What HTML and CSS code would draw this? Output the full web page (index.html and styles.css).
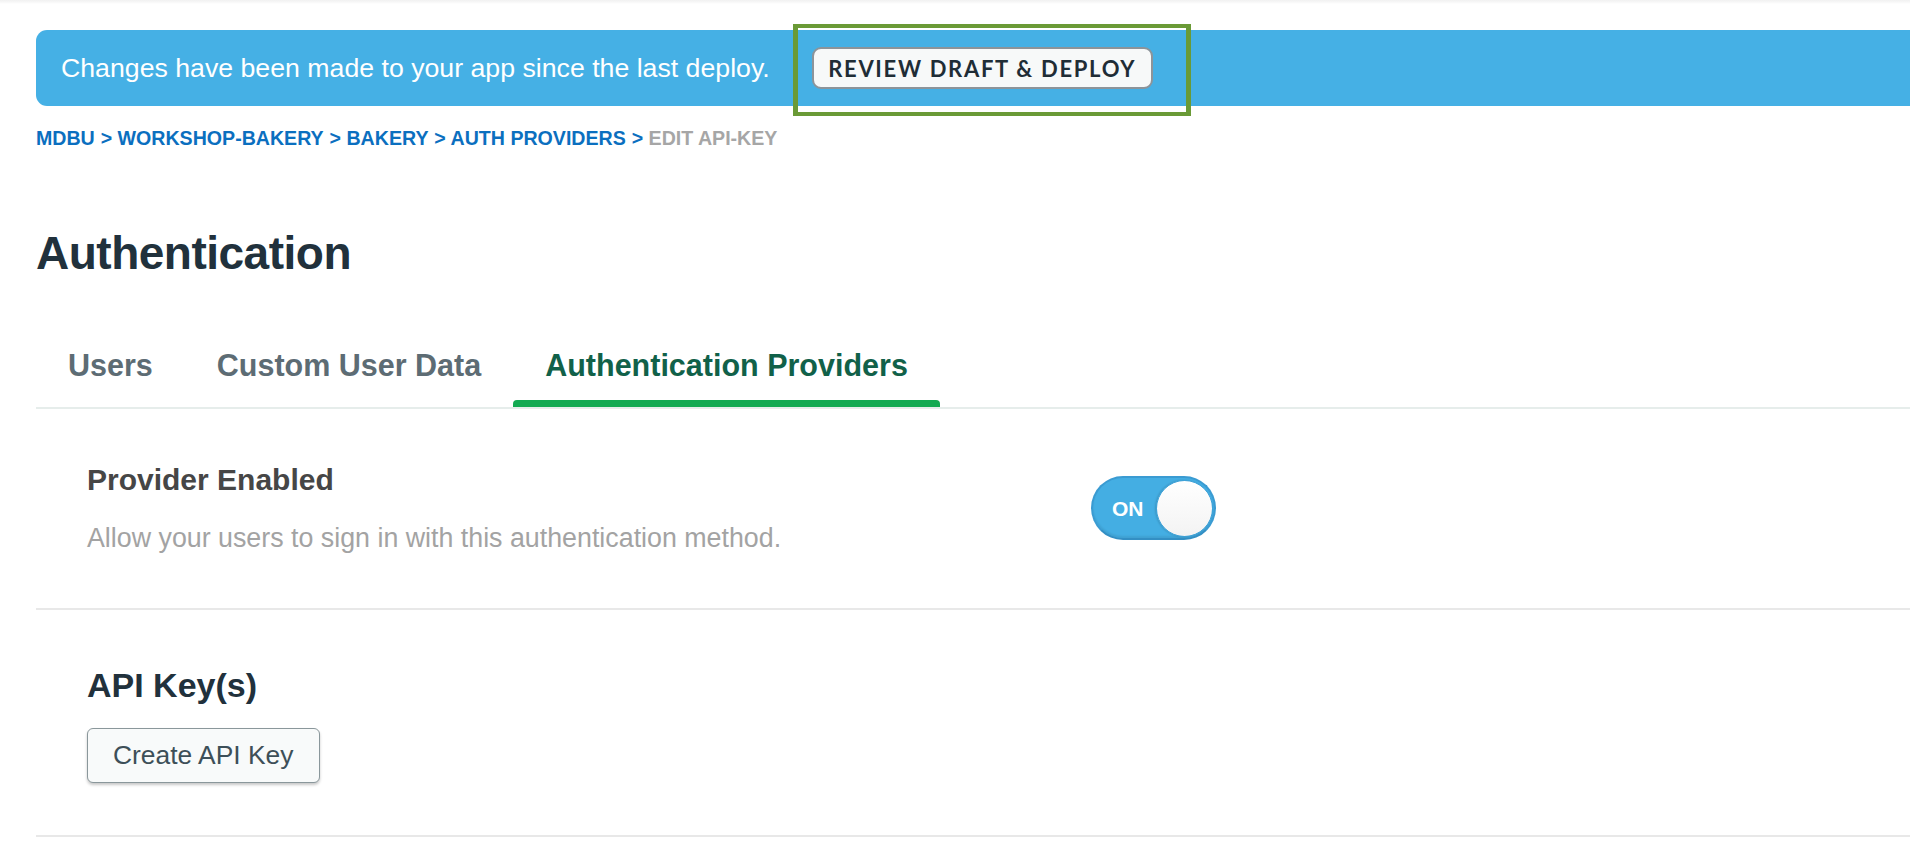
FILE: index.html
```html
<!DOCTYPE html>
<html lang="en">
<head>
<meta charset="utf-8">
<title>Authentication</title>
<link rel="stylesheet" href="styles.css">
</head>
<body>
<main class="page">
  <div class="banner">
    <span class="banner-text">Changes have been made to your app since the last deploy.</span>
    <span class="deploy-wrap">
      <button class="deploy-btn" type="button">Review Draft &amp; Deploy</button>
      <span class="highlight"></span>
    </span>
  </div>

  <nav class="crumbs">
    <a class="crumb" href="#">MDBU</a><span class="sep">&gt;</span>
    <a class="crumb" href="#">WORKSHOP-BAKERY</a><span class="sep">&gt;</span>
    <a class="crumb" href="#">BAKERY</a><span class="sep">&gt;</span>
    <a class="crumb" href="#">AUTH PROVIDERS</a><span class="sep">&gt;</span>
    <span class="crumb-current">EDIT API-KEY</span>
  </nav>

  <h1 class="title">Authentication</h1>

  <div class="tabs">
    <span class="tab">Users</span>
    <span class="tab">Custom User Data</span>
    <span class="tab tab-active">Authentication Providers</span>
  </div>

  <section class="setting-row">
    <div class="setting-text">
      <div class="setting-title">Provider Enabled</div>
      <div class="setting-desc">Allow your users to sign in with this authentication method.</div>
    </div>
    <div class="toggle">
      <span class="toggle-label">ON</span>
      <span class="toggle-knob"></span>
    </div>
  </section>

  <section class="keys">
    <h2 class="keys-title">API Key(s)</h2>
    <button class="create-btn" type="button">Create API Key</button>
  </section>
</main>
</body>
</html>
```

FILE: styles.css
```css
html, body {
  margin: 0;
  padding: 0;
}

body {
  background-color: #ffffff;
  background-image: linear-gradient(to bottom, #f1f1f1 0, #f7f7f7 2px, #ffffff 4px);
  background-repeat: no-repeat;
  background-size: 100% 4px;
  font-family: "Liberation Sans", Arial, Helvetica, sans-serif;
  color: #21313c;
  overflow: hidden;
}

.page {
  padding: 30px 0 0 36px;
}

/* Banner */
.banner {
  display: flex;
  align-items: center;
  height: 76px;
  padding-left: 25px;
  background: #45b0e5;
  border-radius: 11px 0 0 11px;
}

.banner-text {
  font-size: 26.7px;
  color: #ffffff;
  white-space: nowrap;
}

.deploy-wrap {
  position: relative;
  display: inline-flex;
  margin-left: 42px;
}

.deploy-btn {
  box-sizing: border-box;
  width: 341px;
  height: 42px;
  padding: 0;
  border: 2px solid #8c949a;
  border-radius: 9px;
  background: #f7f9f9;
  color: #1f2d36;
  font-family: Lato, "Liberation Sans", sans-serif;
  font-weight: 700;
  font-size: 22px;
  letter-spacing: 1.7px;
  text-transform: uppercase;
}

.highlight {
  position: absolute;
  left: -19px;
  right: -38px;
  top: -23px;
  bottom: -27px;
  border-style: solid;
  border-color: #6a9a36;
  border-width: 4px 5px;
  pointer-events: none;
}

/* Breadcrumbs */
.crumbs {
  margin-top: 20px;
  font-size: 19.6px;
  line-height: 24px;
  font-weight: 700;
  white-space: nowrap;
}

.crumb {
  color: #0b6fbf;
  text-decoration: none;
}

.sep {
  color: #0b6fbf;
  margin-left: 0.3em;
}

.crumb-current {
  color: #a6a6a6;
}

/* Title */
.title {
  margin: 75px 0 66px;
  font-size: 46px;
  line-height: 56px;
  font-weight: 700;
  letter-spacing: -0.5px;
  color: #21313c;
}

/* Tabs */
.tabs {
  display: flex;
  border-bottom: 2px solid #e6edeb;
}

.tab {
  position: relative;
  padding: 0 32px 24px;
  font-size: 30.5px;
  line-height: 36px;
  font-weight: 700;
  color: #5d6c74;
  white-space: nowrap;
}

.tab-active {
  color: #116149;
}

.tab-active::after {
  content: "";
  position: absolute;
  left: 0;
  right: 0;
  bottom: 0;
  height: 7px;
  border-radius: 4px 4px 0 0;
  background: #13aa52;
}

/* Setting row */
.setting-row {
  display: grid;
  grid-template-columns: 1004px auto;
  align-items: center;
  padding: 53px 0 54px 51px;
  border-bottom: 2px solid #e8e8e8;
}

.setting-title {
  font-size: 30px;
  line-height: 36px;
  font-weight: 700;
  color: #464646;
}

.setting-desc {
  margin-top: 24px;
  font-size: 26.8px;
  line-height: 32px;
  color: #a3a3a3;
  white-space: nowrap;
}

.toggle {
  box-sizing: border-box;
  display: flex;
  align-items: center;
  justify-content: space-between;
  width: 125px;
  height: 64px;
  padding: 0 1px 0 19px;
  border: 2px solid #3a9bd2;
  border-bottom-color: #338fc4;
  border-radius: 32px;
  background: #44aee3;
  box-shadow: inset 0 -2px 2px rgba(0, 0, 0, 0.08);
}

.toggle-label {
  font-size: 21px;
  font-weight: 700;
  color: #ffffff;
  line-height: 1;
}

.toggle-knob {
  box-sizing: border-box;
  width: 57px;
  height: 57px;
  border-radius: 50%;
  background: linear-gradient(to bottom, #ffffff 0%, #f3f3f3 100%);
  border: 1px solid #3ea0d6;
  box-shadow: -1px 0 2px rgba(0, 0, 0, 0.15);
}

/* API Keys */
.keys {
  padding: 55px 0 52px 51px;
  border-bottom: 2px solid #e8e8e8;
}

.keys-title {
  margin: 0 0 23px;
  font-size: 34px;
  line-height: 40px;
  font-weight: 700;
  color: #21313c;
}

.create-btn {
  box-sizing: border-box;
  width: 233px;
  height: 55px;
  padding: 0 0 0 25px;
  text-align: left;
  border: 1.5px solid #8a979b;
  border-radius: 6px;
  background: #f8fafa;
  box-shadow: 0 2px 3px rgba(0, 0, 0, 0.22);
  font-family: "Liberation Sans", Arial, sans-serif;
  font-size: 26.4px;
  color: #3d4f58;
}
```
